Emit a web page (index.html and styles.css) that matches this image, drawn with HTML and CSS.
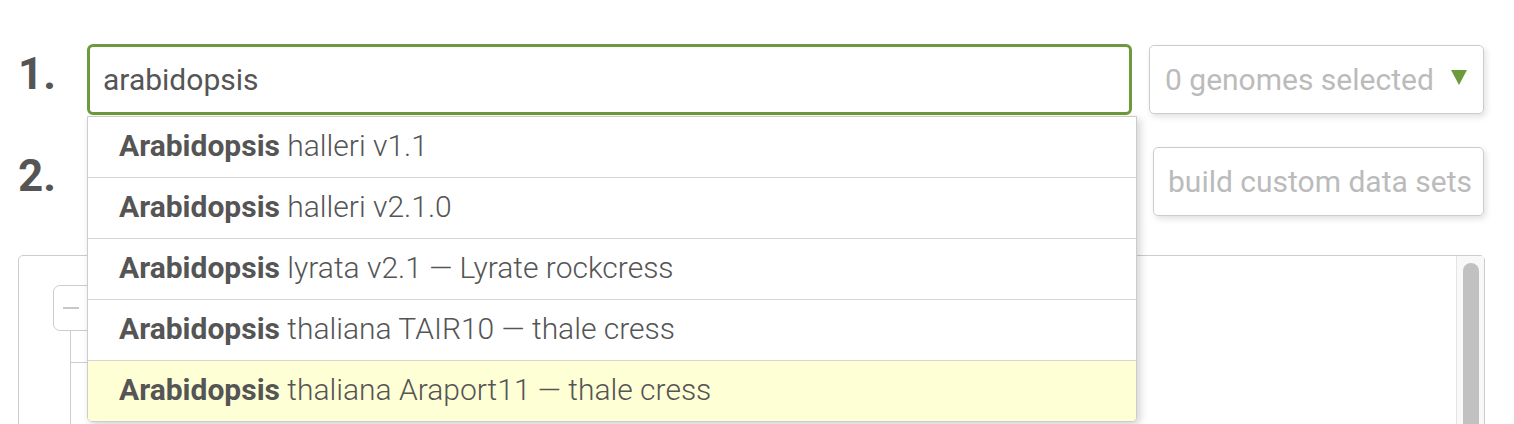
FILE: index.html
```html
<!DOCTYPE html>
<html>
<head>
<meta charset="utf-8">
<link rel="stylesheet" href="styles.css">
</head>
<body>
<div class="page">
  <div class="row row-one">
    <span class="step">1.</span>
    <div class="search-wrap">
      <div class="search">arabidopsis</div>
      <ul class="suggest">
        <li class="item"><b>Arabidopsis</b> halleri v1.1</li>
        <li class="item"><b>Arabidopsis</b> halleri v2.1.0</li>
        <li class="item"><b>Arabidopsis</b> lyrata v2.1 — Lyrate rockcress</li>
        <li class="item"><b>Arabidopsis</b> thaliana TAIR10 — thale cress</li>
        <li class="item active"><b>Arabidopsis</b> thaliana Araport11 — thale cress</li>
      </ul>
    </div>
    <div class="select">
      <span class="placeholder">0 genomes selected</span>
      <span class="tri"></span>
    </div>
  </div>
  <div class="row row-two">
    <span class="step">2.</span>
    <div class="fill"></div>
    <div class="build">build custom data sets</div>
  </div>
  <div class="tree">
    <div class="tree-body">
      <div class="node">
        <div class="toggle"><span class="minus"></span></div>
        <div class="branch">
          <div class="sub"><span class="sub-box"></span></div>
        </div>
      </div>
    </div>
    <div class="scrollbar"><div class="thumb"></div></div>
  </div>
</div>
</body>
</html>
```

FILE: styles.css
```css
* { box-sizing: border-box; }
html, body { margin: 0; padding: 0; background: #fff; }
body {
  font-family: Roboto, "Liberation Sans", Arial, sans-serif;
  color: #555;
  overflow: hidden;
  height: 424px;
}
.page {
  padding: 44px 0 0 18px;
}
.row {
  display: flex;
  align-items: flex-start;
}
.step {
  width: 69px;
  flex: none;
  font-size: 44px;
  font-weight: 700;
  line-height: 44px;
  color: #555;
}
.row-one .step { margin-top: 8px; }
.search-wrap {
  position: relative;
  width: 1045px;
  flex: none;
}
.search {
  height: 71px;
  border: 3px solid #6d9a3c;
  border-radius: 6px;
  padding-left: 13px;
  font-size: 30px;
  line-height: 65px;
  color: #555;
}
.suggest {
  position: absolute;
  left: 0;
  top: 72px;
  width: 1050px;
  margin: 0;
  padding: 0;
  list-style: none;
  background: #fff;
  border: 1px solid #ccc;
  border-radius: 0 0 5px 5px;
  box-shadow: 3px 3px 8px rgba(0,0,0,0.18);
  z-index: 5;
}
.item {
  height: 61px;
  padding: 0 0 3px 31px;
  font-size: 30px;
  font-weight: 300;
  line-height: 57px;
  color: #555;
  border-top: 1px solid #d6d6d6;
  white-space: nowrap;
}
.item:first-child { border-top: none; height: 60px; }
.item b { font-weight: 700; }
.item.active {
  background: #ffffd6;
  border-radius: 0 0 4px 4px;
}
.select {
  margin: 1px 0 0 17px;
  width: 335px;
  height: 69px;
  border: 1px solid #ccc;
  border-radius: 5px;
  box-shadow: 2px 3px 6px rgba(0,0,0,0.12);
  display: flex;
  align-items: center;
  justify-content: space-between;
  padding: 0 16px 0 15px;
}
.placeholder {
  font-size: 30px;
  line-height: 67px;
  color: #bbb;
}
.tri {
  width: 0;
  height: 0;
  border-left: 8px solid transparent;
  border-right: 8px solid transparent;
  border-top: 15px solid #6d9a3c;
  margin-top: -4px;
}
.row-two {
  margin-top: 32px;
}
.row-two .step { margin-top: 7px; }
.fill { width: 1066px; flex: none; }
.build {
  width: 331px;
  height: 69px;
  border: 1px solid #ccc;
  border-radius: 5px;
  box-shadow: 2px 3px 6px rgba(0,0,0,0.12);
  padding-left: 14px;
  font-size: 30px;
  line-height: 67px;
  color: #bbb;
  white-space: nowrap;
}
.tree {
  margin-top: 39px;
  width: 1467px;
  height: 200px;
  border: 1px solid #ccc;
  border-radius: 5px;
  display: flex;
}
.tree-body {
  flex: 1;
  padding: 29px 0 0 34px;
}
.node { position: relative; }
.toggle {
  width: 40px;
  height: 46px;
  border: 1px solid #ccc;
  border-radius: 7px;
  display: flex;
  align-items: center;
  padding-left: 9px;
}
.minus {
  width: 16px;
  height: 2px;
  background: #c8c8c8;
}
.branch {
  margin-left: 17px;
  height: 120px;
  border-left: 1px solid #ccc;
  padding-top: 18px;
}
.sub {
  display: flex;
  align-items: flex-start;
}
.sub::before {
  content: "";
  width: 16px;
  margin-top: 13px;
  border-top: 1px solid #ccc;
}
.sub-box {
  width: 30px;
  height: 30px;
  border: 1px solid #ccc;
  border-radius: 6px;
}
.scrollbar {
  width: 28px;
  border-left: 1px solid #e4e4e4;
  background: #f8f8f8;
  padding: 7px 0 0 6px;
}
.thumb {
  width: 16px;
  height: 300px;
  border-radius: 8px;
  background: #c1c1c1;
}
```
